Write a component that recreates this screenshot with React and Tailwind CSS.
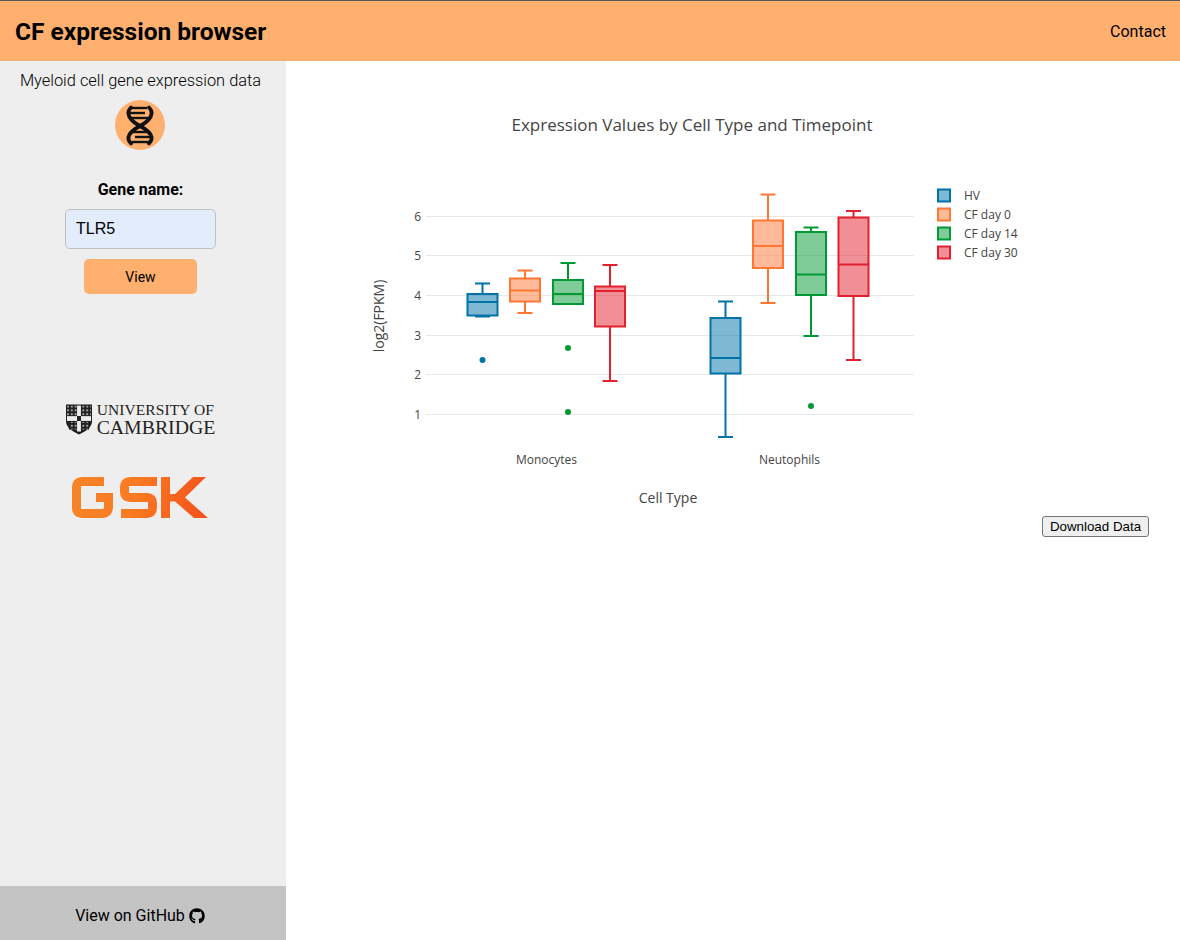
import { FaGithub } from 'react-icons/fa';

const boxes = [
  { color: '#0072a8', x: 482.5, top: 294, bottom: 315.5, median: 302, whiskerTop: 283.5, whiskerBottom: 316.5, outliers: [360] },
  { color: '#ff7733', x: 525, top: 278.5, bottom: 301.5, median: 290.5, whiskerTop: 270.5, whiskerBottom: 313, outliers: [] },
  { color: '#009933', x: 568, top: 280, bottom: 304, median: 294, whiskerTop: 263, whiskerBottom: 304, outliers: [348, 412] },
  { color: '#e3202f', x: 610, top: 286.5, bottom: 326.5, median: 291, whiskerTop: 265, whiskerBottom: 381, outliers: [] },
  { color: '#0072a8', x: 725.5, top: 318, bottom: 373.5, median: 358, whiskerTop: 301.5, whiskerBottom: 437, outliers: [] },
  { color: '#ff7733', x: 768, top: 220.5, bottom: 268, median: 246, whiskerTop: 194.5, whiskerBottom: 303, outliers: [] },
  { color: '#009933', x: 811, top: 232, bottom: 295, median: 274.5, whiskerTop: 227.5, whiskerBottom: 336, outliers: [406] },
  { color: '#e3202f', x: 853.5, top: 217.5, bottom: 296, median: 264.5, whiskerTop: 211, whiskerBottom: 360, outliers: [] },
];

const gridLines = [
  { label: '6', y: 216.5 },
  { label: '5', y: 255.5 },
  { label: '4', y: 295.5 },
  { label: '3', y: 335.5 },
  { label: '2', y: 374.5 },
  { label: '1', y: 414.5 },
];

const legend = [
  { label: 'HV', color: '#0072a8', y: 195.5 },
  { label: 'CF day 0', color: '#ff7733', y: 214.5 },
  { label: 'CF day 14', color: '#009933', y: 233.5 },
  { label: 'CF day 30', color: '#e3202f', y: 252.5 },
];

const ExpressionChart = () => (
  <svg width="894" height="455" viewBox="286 61 894 455" className="block" style={{ fontFamily: '"Open Sans", sans-serif' }}>
    <text x="692" y="131" textAnchor="middle" fontSize="17" fill="#444">Expression Values by Cell Type and Timepoint</text>

    {gridLines.map((g) => (
      <g key={g.label}>
        <line x1="426" x2="914" y1={g.y} y2={g.y} stroke="#e8e8e8" strokeWidth="1" />
        <text x="421" y={g.y + 4.5} textAnchor="end" fontSize="12" fill="#444">{g.label}</text>
      </g>
    ))}

    {boxes.map((b, i) => (
      <g key={i} stroke={b.color} strokeWidth="2" fill="none">
        <line x1={b.x} x2={b.x} y1={b.whiskerTop} y2={b.top} />
        <line x1={b.x} x2={b.x} y1={b.bottom} y2={b.whiskerBottom} />
        <line x1={b.x - 7.5} x2={b.x + 7.5} y1={b.whiskerTop} y2={b.whiskerTop} />
        <line x1={b.x - 7.5} x2={b.x + 7.5} y1={b.whiskerBottom} y2={b.whiskerBottom} />
        <rect x={b.x - 15} y={b.top} width="30" height={b.bottom - b.top} fill={b.color} fillOpacity="0.5" />
        <line x1={b.x - 15} x2={b.x + 15} y1={b.median} y2={b.median} />
        {b.outliers.map((y) => (
          <circle key={y} cx={b.x} cy={y} r="3" fill={b.color} stroke="none" />
        ))}
      </g>
    ))}

    <text x="546.5" y="464" textAnchor="middle" fontSize="12" fill="#444">Monocytes</text>
    <text x="789.5" y="464" textAnchor="middle" fontSize="12" fill="#444">Neutophils</text>
    <text x="668" y="503" textAnchor="middle" fontSize="14" fill="#444">Cell Type</text>
    <text transform="translate(384 316) rotate(-90)" textAnchor="middle" fontSize="14" fill="#444">log2(FPKM)</text>

    {legend.map((l) => (
      <g key={l.label}>
        <rect x="938" y={l.y - 6} width="12" height="12" fill={l.color} fillOpacity="0.5" stroke={l.color} strokeWidth="2" />
        <text x="964" y={l.y + 4} fontSize="12" fill="#444">{l.label}</text>
      </g>
    ))}
  </svg>
);

const DnaIcon = () => (
  <svg width="60" height="60" viewBox="0 0 60 60" className="shrink-0" fill="none" stroke="#111">
    <g strokeWidth="3.8" strokeLinecap="round">
      <path d="M21 12.5C15.500 18 19 25 30 31C41 37 44.500 43 39 48.500" />
      <path d="M39 12.500C44.500 18 41 25 30 31C19 37 15.500 43 21 48.500" />
    </g>
    <g strokeWidth="2.4">
      <path d="M19 13H37" />
      <path d="M19 18H35" />
      <path d="M21 23H39" />
      <path d="M23 37H40" />
      <path d="M25 42H41" />
      <path d="M22 47H40" />
    </g>
  </svg>
);

const CambridgeLogo = () => (
  <div className="flex items-center gap-[5px]">
    <svg width="26" height="31" viewBox="0 0 27 31">
      <defs>
        <pattern id="crest" width="4" height="4" patternUnits="userSpaceOnUse">
          <rect width="4" height="4" fill="#222" />
          <circle cx="2" cy="2" r="1" fill="#ccc" />
        </pattern>
      </defs>
      <path d="M0 0H27V17C27 24 20 28 13.5 31C7 28 0 24 0 17Z" fill="#1c1c1c" />
      <rect x="1" y="1" width="10.5" height="11" fill="url(#crest)" />
      <rect x="15.5" y="1" width="10.5" height="11" fill="url(#crest)" />
      <rect x="3" y="18" width="8.5" height="8" fill="url(#crest)" />
      <rect x="15.5" y="18" width="8.5" height="8" fill="url(#crest)" />
      <rect x="11.5" y="1" width="4" height="11" fill="#eee" />
      <rect x="11.5" y="17" width="4" height="11" fill="#eee" />
      <rect x="1" y="12" width="10.5" height="5" fill="#eee" />
      <rect x="15.5" y="12" width="10.5" height="5" fill="#eee" />
      <rect x="11.5" y="12" width="4" height="5" fill="#222" />
    </svg>
    <div className="font-['Liberation_Serif',serif] text-[#222] leading-none">
      <div className="text-[15.5px] leading-[14px] mb-[1px] tracking-[0.1px] whitespace-nowrap">UNIVERSITY OF</div>
      <div className="text-[19.8px] leading-[18px] whitespace-nowrap">CAMBRIDGE</div>
    </div>
  </div>
);

const GskLogo = () => (
  <svg width="137" height="41" viewBox="0 0 137 41" role="img" aria-label="GSK logo">
    <defs>
      <linearGradient id="gskFill" gradientUnits="userSpaceOnUse" x1="0" y1="10" x2="137" y2="41">
        <stop offset="0" stopColor="#f68428" />
        <stop offset="0.45" stopColor="#fb7a22" />
        <stop offset="1" stopColor="#f2501c" />
      </linearGradient>
    </defs>
    <g fill="none" stroke="url(#gskFill)" strokeWidth="9">
      <path d="M32 4.500H10Q4.500 4.500 4.500 10V31Q4.500 36.500 10 36.500H30Q36.500 36.500 36.500 30V20.500H24" />
      <path d="M85 4.500H58Q52.500 4.500 52.500 10V15Q52.500 20.500 58 20.500H75Q80.500 20.500 80.500 26V31Q80.500 36.500 75 36.500H49" />
    </g>
    <path d="M89 0H98V17H103L121 0H134L113 20.500L136 41H122L103 24.500H98V41H89Z" fill="url(#gskFill)" />
  </svg>
);

const App = () => {
  return (
    <div className="h-screen flex flex-col overflow-hidden bg-white font-['Roboto',sans-serif] text-black">
      {/* Header */}
      <header className="h-[61px] shrink-0 bg-[#ffaf6e] border-t border-[#555] flex items-center justify-between pt-[2px] pl-[15px] pr-[14px]">
        <h1 className="text-[24.5px] font-bold">CF expression browser</h1>
        <a className="text-base">Contact</a>
      </header>

      <div className="flex-1 flex min-h-0">
        {/* Sidebar */}
        <aside className="w-[286px] shrink-0 bg-[#eeeeee] flex flex-col">
          <div className="flex-1 flex flex-col items-center pr-[5px]">
            <p className="mt-[9px] text-[16.4px] leading-[22px] font-light">Myeloid cell gene expression data</p>
            <div className="mt-[8px] mr-[1px] w-[50px] h-[50px] rounded-full bg-[#ffaf6e] flex items-center justify-center">
              <DnaIcon />
            </div>
            <label className="mt-[30px] text-base leading-[20px] font-bold">Gene name:</label>
            <input
              readOnly
              value="TLR5"
              className="mt-[9px] w-[151px] h-[40px] px-[10px] rounded-[5px] border border-[#c0c0c0] bg-[#e2ecfb] text-base font-['Liberation_Sans',sans-serif] outline-none"
            />
            <button className="mt-[10px] w-[113px] h-[35px] rounded-[5px] bg-[#ffaf6e] text-sm">View</button>
            <div className="mt-[109px]">
              <CambridgeLogo />
            </div>
            <div className="mt-[41px]">
              <GskLogo />
            </div>
          </div>
          <div className="h-[54px] shrink-0 bg-[#c4c4c4] flex items-center justify-center gap-[4px] pt-[5px] pr-[6px] text-base">
            <span>View on GitHub</span>
            <FaGithub className="w-4 h-4" />
          </div>
        </aside>

        {/* Chart */}
        <main className="flex-1 min-w-0 flex flex-col">
          <ExpressionChart />
          <div className="flex justify-end pr-[31px]">
            <button className="h-[21px] w-[107px] rounded-[3px] border border-[#767676] bg-[#efefef] text-[13.33px] leading-none font-['Liberation_Sans',sans-serif]">
              Download Data
            </button>
          </div>
        </main>
      </div>
    </div>
  );
};

export default App;
